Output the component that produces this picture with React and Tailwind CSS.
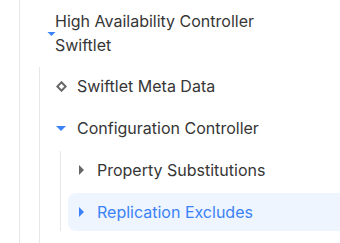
const Down = ({ w = 10, h = 5 }) => (
  <svg width={w} height={h} viewBox="0 0 10 5" className="overflow-visible">
    <polygon points="0,0 10,0 5,5" fill="#3b82f6" />
  </svg>
);

const Right = ({ color }) => (
  <svg width="5" height="10" viewBox="0 0 5 10">
    <polygon points="0,0 5,5 0,10" fill={color} />
  </svg>
);

const Diamond = () => (
  <svg width="11" height="11" viewBox="0 0 11 11">
    <polygon points="5.5,1.3 9.7,5.5 5.5,9.7 1.3,5.5" fill="none" stroke="#666" strokeWidth="2" />
  </svg>
);

function Row({ icon, label, active, inner }) {
  return (
    <div
      className={`flex h-[38px] items-center gap-2 ${inner ? 'ml-[7px] pl-[5px]' : 'ml-[7px] pl-[6px]'} ${
        active ? 'rounded-l-lg bg-[#eef5ff] text-[#3b82f6]' : 'text-[#363636]'
      }`}
    >
      <span className="flex h-4 w-4 items-center justify-center">{icon}</span>
      <span>{label}</span>
    </div>
  );
}

export default function App() {
  return (
    <div className="h-[243px] w-[340px] overflow-hidden bg-white font-['Inter',sans-serif] text-[16px] leading-6">
      <div className="ml-[19px] h-full border-l border-[#e8e8ea]">
        {/* top level */}
        <div className="flex items-center pl-[27px] pt-[9px] pb-[6px] text-[#363636]">
          <span className="flex w-[8px] items-center pt-[2px]">
            <Down w={9} h={4} />
          </span>
          <span className="w-[240px]">High Availability Controller Swiftlet</span>
        </div>

        <div className="mt-1 ml-[19px] flex flex-col gap-1 border-l border-[#e8e8ea] pb-8">
          <Row icon={<Diamond />} label="Swiftlet Meta Data" />
          <Row icon={<Down />} label="Configuration Controller" />
          <div className="ml-[20px] flex flex-col gap-1 border-l border-[#e8e8ea]">
            <Row inner icon={<Right color="#666" />} label="Property Substitutions" />
            <Row inner active icon={<Right color="#3b82f6" />} label="Replication Excludes" />
          </div>
        </div>
      </div>
    </div>
  );
}
